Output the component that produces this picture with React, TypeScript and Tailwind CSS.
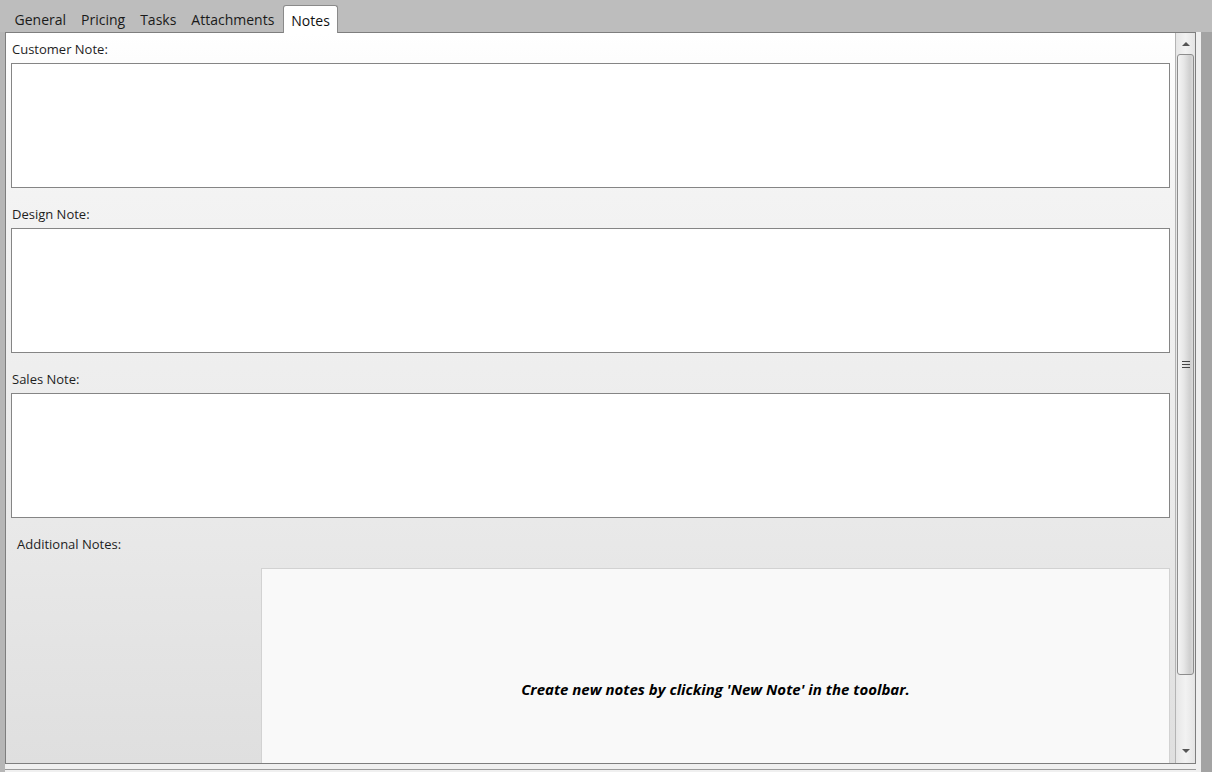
import React from "react";

const tabs = ["General", "Pricing", "Tasks", "Attachments", "Notes"];

function NoteBox({ label, first }: { label: string; first?: boolean }) {
  return (
    <div className={first ? "mt-[6px]" : "mt-[16px]"}>
      <div className="h-[20px] leading-[20px] pl-[1px] text-[13px] text-[#1e1e1e]">{label}</div>
      <div className="mt-[4px] h-[125px] border border-[#858585] bg-white" />
    </div>
  );
}

function ScrollBar() {
  return (
    <div className="flex w-[20px] flex-col border-l border-[#b4b4b4] bg-[linear-gradient(to_right,#e6e6e6,#f2f2f2_50%,#e4e4e4)]">
      <div className="flex h-[21px] items-center justify-center">
        <div className="h-0 w-0 border-x-[4px] border-b-[4px] border-x-transparent border-b-[#555]" />
      </div>
      <div className="mx-[1px] flex h-[621px] items-center justify-center rounded-[3px] border border-[#8d8d8d] bg-[linear-gradient(to_right,#f4f4f4,#e6e6e6_40%,#cfcfcf_80%,#dadada)]">
        <div className="flex flex-col gap-[2px]">
          <div className="h-[1px] w-[8px] bg-[#444]" />
          <div className="h-[1px] w-[8px] bg-[#444]" />
          <div className="h-[1px] w-[8px] bg-[#444]" />
        </div>
      </div>
      <div className="flex-1" />
      <div className="flex h-[24px] items-center justify-center">
        <div className="h-0 w-0 border-x-[4px] border-t-[4px] border-x-transparent border-t-[#555]" />
      </div>
    </div>
  );
}

export default function App() {
  return (
    <div className="relative h-[772px] w-[1212px] overflow-hidden bg-[#bdbdbd] font-['Segoe_UI','Open_Sans',sans-serif]">
      {/* tab strip */}
      <div className="flex h-[32px] items-end pl-[7px]">
        {tabs.map((t) =>
          t === "Notes" ? (
            <div
              key={t}
              className="relative z-10 -mb-[1px] ml-[1px] flex h-[28px] items-center rounded-t-[3px] border border-b-0 border-[#8a8a8a] bg-white px-[7.5px] pt-[2px] text-[14px] text-[#111]"
            >
              {t}
            </div>
          ) : (
            <div key={t} className="flex h-[28px] items-center px-[7.5px] pt-[2px] text-[14px] text-[#1a1a1a]">
              {t}
            </div>
          )
        )}
      </div>

      <div className="flex h-[740px]">
        <div className="w-[5px] bg-[#b6b6b6]" />
        <div className="flex flex-col bg-[#f0f0f0]">
          {/* panel */}
          <div className="flex h-[732px] w-[1191px] border border-[#7e7e7e] bg-[linear-gradient(to_bottom,#ffffff_0%,#f3f3f3_22%,#ebebeb_60%,#dfdfdf_100%)]">
            <div className="flex flex-1 flex-col overflow-hidden pl-[5px] pr-[5px]">
              <NoteBox label="Customer Note:" first />
              <NoteBox label="Design Note:" />
              <NoteBox label="Sales Note:" />
              <div className="mt-[16px] h-[20px] pl-[6px] text-[13px] leading-[20px] text-[#1e1e1e]">Additional Notes:</div>
              <div className="mt-[14px] flex flex-1 overflow-hidden">
                <div className="w-[250px] shrink-0" />
                <div className="flex h-[230px] flex-1 items-start justify-center border border-[#d2d2d2] bg-[#f9f9f9] pt-[109px]">
                  <span className="text-[15px] font-bold italic text-black">
                    Create new notes by clicking 'New Note' in the toolbar.
                  </span>
                </div>
              </div>
            </div>
            <ScrollBar />
          </div>
          <div className="mt-[5px] h-[1px] bg-[#9a9a9a]" />
          <div className="flex-1" />
        </div>
        <div className="w-[5px] bg-[#efefef]" />
        <div className="flex-1 bg-[#a3a3a3]" />
      </div>
    </div>
  );
}
